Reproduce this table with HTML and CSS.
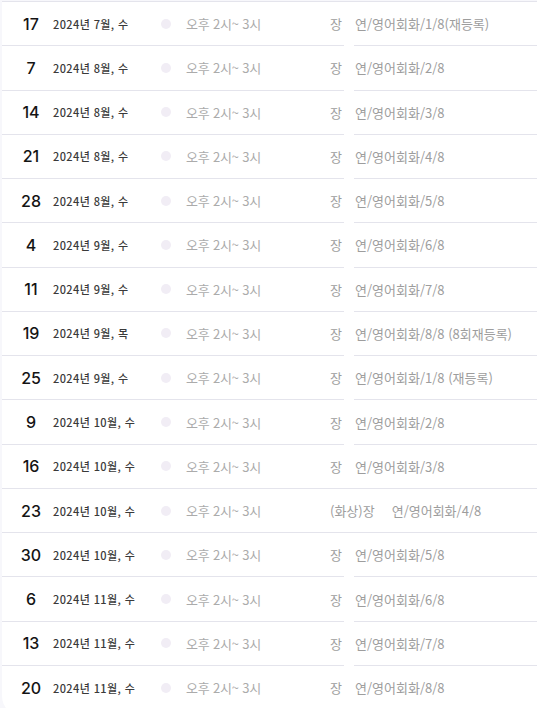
FILE: index.html
```html
<!DOCTYPE html>
<html lang="ko">
<head>
  <meta charset="UTF-8">
  <meta name="viewport" content="width=device-width, initial-scale=1.0">
  <title>수업 일정</title>
  <link rel="stylesheet" href="styles.css">
</head>
<body>
  <div class="card">
    <div class="row">
      <div class="main"><span class="day">17</span><span class="date">2024년 7월, 수</span><span class="dot"></span><span class="time">오후 2시~ 3시</span><span class="name">장</span></div>
      <div class="spacer"></div>
      <div class="course">연/영어회화/1/8(재등록)</div>
    </div>
    <div class="row">
      <div class="main"><span class="day">7</span><span class="date">2024년 8월, 수</span><span class="dot"></span><span class="time">오후 2시~ 3시</span><span class="name">장</span></div>
      <div class="spacer"></div>
      <div class="course">연/영어회화/2/8</div>
    </div>
    <div class="row">
      <div class="main"><span class="day">14</span><span class="date">2024년 8월, 수</span><span class="dot"></span><span class="time">오후 2시~ 3시</span><span class="name">장</span></div>
      <div class="spacer"></div>
      <div class="course">연/영어회화/3/8</div>
    </div>
    <div class="row">
      <div class="main"><span class="day">21</span><span class="date">2024년 8월, 수</span><span class="dot"></span><span class="time">오후 2시~ 3시</span><span class="name">장</span></div>
      <div class="spacer"></div>
      <div class="course">연/영어회화/4/8</div>
    </div>
    <div class="row">
      <div class="main"><span class="day">28</span><span class="date">2024년 8월, 수</span><span class="dot"></span><span class="time">오후 2시~ 3시</span><span class="name">장</span></div>
      <div class="spacer"></div>
      <div class="course">연/영어회화/5/8</div>
    </div>
    <div class="row">
      <div class="main"><span class="day">4</span><span class="date">2024년 9월, 수</span><span class="dot"></span><span class="time">오후 2시~ 3시</span><span class="name">장</span></div>
      <div class="spacer"></div>
      <div class="course">연/영어회화/6/8</div>
    </div>
    <div class="row">
      <div class="main"><span class="day">11</span><span class="date">2024년 9월, 수</span><span class="dot"></span><span class="time">오후 2시~ 3시</span><span class="name">장</span></div>
      <div class="spacer"></div>
      <div class="course">연/영어회화/7/8</div>
    </div>
    <div class="row">
      <div class="main"><span class="day">19</span><span class="date">2024년 9월, 목</span><span class="dot"></span><span class="time">오후 2시~ 3시</span><span class="name">장</span></div>
      <div class="spacer"></div>
      <div class="course">연/영어회화/8/8 (8회재등록)</div>
    </div>
    <div class="row">
      <div class="main"><span class="day">25</span><span class="date">2024년 9월, 수</span><span class="dot"></span><span class="time">오후 2시~ 3시</span><span class="name">장</span></div>
      <div class="spacer"></div>
      <div class="course">연/영어회화/1/8 (재등록)</div>
    </div>
    <div class="row">
      <div class="main"><span class="day">9</span><span class="date">2024년 10월, 수</span><span class="dot"></span><span class="time">오후 2시~ 3시</span><span class="name">장</span></div>
      <div class="spacer"></div>
      <div class="course">연/영어회화/2/8</div>
    </div>
    <div class="row full">
      <div class="main"><span class="day">16</span><span class="date">2024년 10월, 수</span><span class="dot"></span><span class="time">오후 2시~ 3시</span><span class="name">장</span></div>
      <div class="spacer"></div>
      <div class="course">연/영어회화/3/8</div>
    </div>
    <div class="row full wide">
      <div class="main"><span class="day">23</span><span class="date">2024년 10월, 수</span><span class="dot"></span><span class="time">오후 2시~ 3시</span><span class="name">(화상)장</span></div>
      <div class="spacer"></div>
      <div class="course">연/영어회화/4/8</div>
    </div>
    <div class="row">
      <div class="main"><span class="day">30</span><span class="date">2024년 10월, 수</span><span class="dot"></span><span class="time">오후 2시~ 3시</span><span class="name">장</span></div>
      <div class="spacer"></div>
      <div class="course">연/영어회화/5/8</div>
    </div>
    <div class="row">
      <div class="main"><span class="day">6</span><span class="date">2024년 11월, 수</span><span class="dot"></span><span class="time">오후 2시~ 3시</span><span class="name">장</span></div>
      <div class="spacer"></div>
      <div class="course">연/영어회화/6/8</div>
    </div>
    <div class="row">
      <div class="main"><span class="day">13</span><span class="date">2024년 11월, 수</span><span class="dot"></span><span class="time">오후 2시~ 3시</span><span class="name">장</span></div>
      <div class="spacer"></div>
      <div class="course">연/영어회화/7/8</div>
    </div>
    <div class="row last">
      <div class="main"><span class="day">20</span><span class="date">2024년 11월, 수</span><span class="dot"></span><span class="time">오후 2시~ 3시</span><span class="name">장</span></div>
      <div class="spacer"></div>
      <div class="course">연/영어회화/8/8</div>
    </div>
  </div>
</body>
</html>
```

FILE: styles.css
```css
* {
  margin: 0;
  padding: 0;
  box-sizing: border-box;
}

body {
  background-color: #f7f7fb;
  font-family: "Noto Sans CJK KR", "Noto Sans", sans-serif;
  overflow: hidden;
}

.card {
  margin: 1px 0 0 2px;
  background: #fff;
  border-top: 1px solid #e4e4ec;
  border-radius: 0 0 0 20px;
  padding-bottom: 6px;
}

.row {
  display: flex;
  height: 44.27px;
}

.main,
.spacer,
.course {
  display: flex;
  align-items: center;
  border-bottom: 1px solid #e4e4ec;
}

.main {
  flex: none;
  min-width: 341px;
}

.spacer {
  width: 10px;
  flex: none;
  border-bottom-color: transparent;
}

.row.full .spacer {
  border-bottom-color: #e4e4ec;
}

.row.last .main,
.row.last .spacer,
.row.last .course {
  border-bottom-color: transparent;
}

.course {
  flex: 1;
  padding-left: 1px;
  font-size: 13px;
  color: #9d9d9d;
  white-space: nowrap;
}

.day {
  width: 42px;
  margin-left: 8px;
  text-align: center;
  font-family: Inter, "Noto Sans", sans-serif;
  font-size: 16px;
  font-weight: 500;
  color: #141414;
}

.date {
  width: 108px;
  margin-left: 1px;
  font-size: 11px;
  font-weight: 500;
  letter-spacing: 0.4px;
  color: #3a3a3a;
}

.dot {
  width: 10px;
  height: 10px;
  border-radius: 50%;
  background: #f1edf5;
}

.time {
  margin-left: 15px;
  width: 144px;
  font-size: 13px;
  letter-spacing: -0.2px;
  color: #ababab;
  white-space: nowrap;
}

.name {
  padding-right: 2px;
  font-size: 13px;
  color: #9d9d9d;
  white-space: nowrap;
}

.row.wide .name {
  padding-right: 6px;
}
```
